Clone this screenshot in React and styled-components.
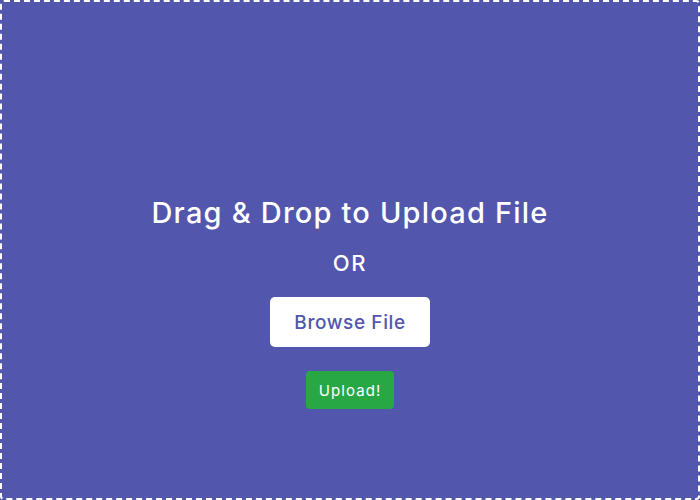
import React from 'react';
import styled, { createGlobalStyle } from 'styled-components';

const GlobalStyle = createGlobalStyle`
  html, body {
    margin: 0;
    padding: 0;
    background: #5256ad;
  }
  * {
    box-sizing: border-box;
  }
`;

const DropArea = styled.div`
  width: 700px;
  height: 500px;
  border: 2px dashed #fff;
  border-radius: 4px;
  background: #5256ad;
  display: flex;
  flex-direction: column;
  align-items: center;
  justify-content: center;
  padding-top: 107px;
  font-family: "Inter", "Open Sans", sans-serif;
  color: #fff;
`;

const Header = styled.header`
  font-size: 29px;
  font-weight: 500;
  letter-spacing: 1.2px;
  line-height: 30px;
  margin: 0 0 3px;
`;

const Divider = styled.span`
  font-size: 22px;
  font-weight: 500;
  letter-spacing: 1.8px;
  line-height: 24px;
  margin: 20px 0 22px;
`;

const BrowseButton = styled.button`
  width: 160px;
  height: 50px;
  border: none;
  border-radius: 5px;
  background: #fff;
  color: #5256ad;
  font-family: inherit;
  font-size: 19px;
  font-weight: 500;
  letter-spacing: 0.6px;
  cursor: pointer;
`;

const UploadButton = styled.button`
  margin-top: 24px;
  width: 88px;
  height: 38px;
  border: none;
  border-radius: 4px;
  background: #28a745;
  color: #fff;
  font-family: inherit;
  font-size: 15px;
  letter-spacing: 1.1px;
  cursor: pointer;
`;

export default function App() {
  return (
    <>
      <GlobalStyle />
      <DropArea>
        <Header>Drag &amp; Drop to Upload File</Header>
        <Divider>OR</Divider>
        <BrowseButton>Browse File</BrowseButton>
        <UploadButton>Upload!</UploadButton>
      </DropArea>
    </>
  );
}
